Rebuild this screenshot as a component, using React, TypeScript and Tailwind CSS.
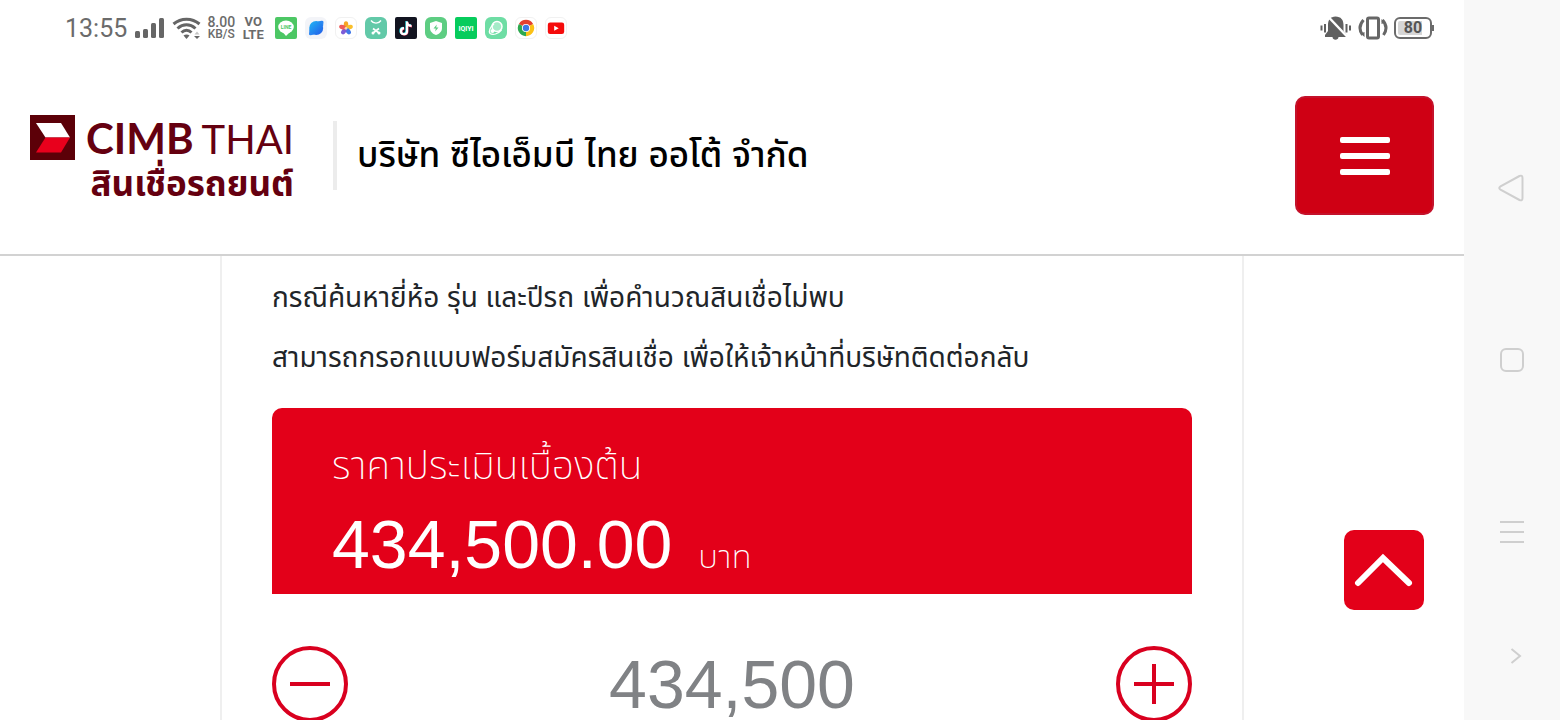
import type { ReactNode } from 'react'
import { useState } from 'react'

const STEP = 500
const APPRAISED = 434500

const SANS = "font-['Liberation_Sans','Noto_Sans_Thai','Noto_Sans',sans-serif]"

function SignalIcon() {
  return (
    <svg width="30" height="22" viewBox="0 0 30 22" fill="#666" aria-hidden="true">
      <rect x="0" y="14" width="5" height="7" rx="1.5" />
      <rect x="8" y="12" width="5" height="9" rx="1.5" />
      <rect x="16" y="6" width="5" height="15" rx="1.5" />
      <rect x="24" y="1" width="5" height="20" rx="1.5" />
    </svg>
  )
}

function WifiIcon() {
  return (
    <svg width="30" height="24" viewBox="0 0 30 24" fill="none" aria-hidden="true">
      <g stroke="#666" strokeWidth="3">
        <path d="M1.500 8C9 1.500 20 1.500 27.500 8" />
        <path d="M5.500 12.500C11 7.500 18 7.500 23.500 12.500" />
        <path d="M9.500 16.500C12.500 13.600 16.500 13.600 19.500 16.500" />
      </g>
      <path d="M11.500 19.500C13 18 16 18 17.500 19.500L14.500 23Z" fill="#666" />
      <path d="M22.500 18.500L25 15.500L27.500 18.500Z" fill="#c4c4c4" />
      <path d="M22 20H28L25 23Z" fill="#666" />
    </svg>
  )
}

function Tile({ label, bg, children }: { label: string; bg: string; children: ReactNode }) {
  return (
    <svg width="22" height="22" viewBox="0 0 22 22" role="img" aria-label={label} className={bg}>
      {children}
    </svg>
  )
}

function AppTiles() {
  return (
    <div className="flex items-center gap-2">
      <Tile label="LINE" bg="rounded-xs bg-[#4cc764]">
        <ellipse cx="11" cy="10" rx="7.800" ry="6.500" fill="#fff" />
        <path d="M8 15.500L11 19L15.500 14.500Z" fill="#fff" />
        <text x="11" y="12" fontSize="5" fontWeight="700" textAnchor="middle" fill="#4cc764" fontFamily="Roboto">
          LINE
        </text>
      </Tile>
      <Tile label="Browser" bg="rounded-md bg-[#f3f4f8]">
        <defs>
          <linearGradient id="planet" x1="0" y1="0" x2="1" y2="1">
            <stop offset="0" stopColor="#22b8f5" />
            <stop offset="1" stopColor="#2358e8" />
          </linearGradient>
        </defs>
        <path d="M13 4.500Q18.500 3 18.500 5L18 10ZM9 17.500Q3.800 19.200 4 17L4.500 12Z" fill="#2b86f2" />
        <circle cx="11.200" cy="11" r="7" fill="url(#planet)" />
      </Tile>
      <Tile label="Gallery" bg="rounded-md border border-[#f1f1f1] bg-white">
        <g transform="translate(11 11.300)">
          <ellipse cx="0" cy="-4" rx="2.500" ry="3.800" fill="#f6a623" />
          <ellipse cx="0" cy="-4" rx="2.500" ry="3.800" fill="#f9bf2b" transform="rotate(72)" />
          <ellipse cx="0" cy="-4" rx="2.500" ry="3.800" fill="#3f78e8" transform="rotate(144)" />
          <ellipse cx="0" cy="-4" rx="2.500" ry="3.800" fill="#7d5bd6" transform="rotate(216)" />
          <ellipse cx="0" cy="-4" rx="2.500" ry="3.800" fill="#ee5a5a" transform="rotate(288)" />
          <circle r="1.500" fill="#f7d9b0" />
        </g>
      </Tile>
      <Tile label="Tools" bg="rounded-md bg-[#62c9a8]">
        <path d="M6 3.500C8.500 7 13.500 7 16 3.500" stroke="#fff" strokeWidth="1.300" fill="none" />
        <path d="M8 11.500L14 16M14 11.500L8 16" stroke="#fff" strokeWidth="1.600" />
        <circle cx="8" cy="16" r="1.500" fill="#fff" />
        <circle cx="14" cy="16" r="1.500" fill="#fff" />
      </Tile>
      <Tile label="TikTok" bg="rounded-xs bg-[#121420]">
        <g fill="none" strokeWidth="2.200">
          <path d="M11.400 4V13.800A3 3 0 1 1 8.400 10.800M11.400 4C11.500 6.800 13.500 8.300 16 8.400" stroke="#25d5e0" />
          <path d="M12.400 5V14.600A3 3 0 1 1 9.400 11.600M12.400 5C12.500 7.800 14.500 9.300 17 9.400" stroke="#e8486b" />
          <path d="M12 4.500V14.200A3 3 0 1 1 9 11.200M12 4.500C12 7.300 14 8.800 16.500 8.900" stroke="#fff" />
        </g>
      </Tile>
      <Tile label="Security" bg="rounded-md bg-[#5dcd82]">
        <path d="M11 4L17 6V11C17 14.500 14.500 16.800 11 18C7.500 16.800 5 14.500 5 11V6Z" fill="#fff" />
        <path d="M11.800 7.500L8.500 11.500H10.800L10.200 14.500L13.500 10.500H11.200Z" fill="#5dcd82" />
      </Tile>
      <Tile label="iQIYI" bg="rounded-xs bg-[#06cc5c]">
        <text x="11" y="13.500" fontSize="7" fontWeight="700" textAnchor="middle" fill="#fff" fontFamily="Roboto">
          IQIYI
        </text>
      </Tile>
      <Tile label="Game space" bg="rounded-md bg-[#6edda4]">
        <circle cx="12" cy="9.500" r="5" stroke="#fff" strokeWidth="1.500" fill="#a5ebc8" />
        <path d="M9 7C5 10 3.500 14 5 16.500C8 18.500 13 17 16.500 13" stroke="#fff" strokeWidth="1.300" fill="none" />
        <circle cx="7.500" cy="14" r="2" fill="#fff" />
      </Tile>
      <Tile label="Chrome" bg="rounded-md border border-[#f1f1f1] bg-white">
        <path d="M11 11L3.200 6.500A9 9 0 0 1 18.800 6.500Z" fill="#e3402f" />
        <path d="M11 11L18.800 6.500A9 9 0 0 1 11 20Z" fill="#fbc116" />
        <path d="M11 11L11 20A9 9 0 0 1 3.200 6.500Z" fill="#2da94f" />
        <circle cx="11" cy="11" r="4.500" fill="#fff" />
        <circle cx="11" cy="11" r="3.500" fill="#3c78e6" />
      </Tile>
      <Tile label="YouTube" bg="rounded-md border border-[#f1f1f1] bg-white">
        <rect x="2" y="5" width="18" height="12.500" rx="2.500" fill="#f50b0b" />
        <path d="M9 8.500L14 11.200L9 14Z" fill="#fff" />
      </Tile>
    </div>
  )
}

function MutedBellIcon() {
  return (
    <svg width="32" height="26" viewBox="0 0 32 26" aria-hidden="true">
      <path
        d="M15.500 1.500C21 1.500 23.500 5 23.500 10V16L26.500 20V22H5V20L8 16V10C8 5 10.500 1.500 15.500 1.500ZM12.500 22H18.500C18.500 25.500 12.500 25.500 12.500 22Z"
        fill="#606060"
      />
      <path d="M7.500 1L27.500 22" stroke="#fff" strokeWidth="2.500" />
      <path d="M4 1L9 1L4 8Z" fill="#fff" />
      <path d="M1.500 10.500V15.500M5 9V17.500M26.500 9V17.500M30 10.500V15.500" stroke="#606060" strokeWidth="2" />
    </svg>
  )
}

function VibrateIcon() {
  return (
    <svg width="30" height="26" viewBox="0 0 30 26" fill="none" stroke="#666" strokeWidth="3" aria-hidden="true">
      <rect x="9.500" y="3" width="11" height="20" rx="1.500" />
      <path d="M5.500 5C1 10 1 15 4.500 20M24.500 5C29 10 29 15 25.500 20" />
      <path d="M2.500 18.500L6.500 17V22ZM27.500 7.500L23.500 9V4Z" fill="#666" stroke="none" />
    </svg>
  )
}

function StatusBar() {
  return (
    <div className="flex h-14 items-center justify-between pr-[30px] pl-[65px] font-[Roboto,sans-serif] text-[#6b6b6b]">
      <div className="flex items-center">
        <span className="mr-2 text-[25px] leading-none">13:55</span>
        <SignalIcon />
        <span className="ml-[7px]">
          <WifiIcon />
        </span>
        <span className="ml-1 flex w-[30px] flex-col items-center text-[12px] leading-[12px] font-medium">
          <span className="text-[14px]">8.00</span>
          <span>KB/S</span>
        </span>
        <span className="mr-[9px] ml-1 flex w-[26px] flex-col items-center text-[13px] leading-[13px] font-bold">
          <span>VO</span>
          <span>LTE</span>
        </span>
        <AppTiles />
      </div>
      <div className="flex items-center gap-[6px]">
        <MutedBellIcon />
        <VibrateIcon />
        <div className="flex items-center">
          <span className="flex h-[22px] w-[38px] items-center justify-center rounded-md border-2 border-[#6b6b6b] p-0.5">
            <span className="flex-1 rounded-xs bg-linear-to-r from-[#d6d6d6] from-80% to-white to-80% text-center text-[16px] leading-[14px] font-bold text-[#555]">
              80
            </span>
          </span>
          <span className="h-[6px] w-[2px] bg-[#6b6b6b]" />
        </div>
      </div>
    </div>
  )
}

function Logo() {
  return (
    <a href="#" className="flex gap-[11px] pt-[10px] text-[#650010]">
      <svg width="45" height="45" viewBox="0 0 45 45" aria-hidden="true">
        <rect width="45" height="45" fill="#5c0008" />
        <path d="M6 8H31L40 22.500H15.500Z" fill="#fff" />
        <path d="M15.500 22.500H40L31 37.500H6Z" fill="#e8001c" />
      </svg>
      <span className="flex w-[208px] flex-col">
        <span className="flex items-baseline justify-between font-[Lato,sans-serif] text-[42px] leading-[46px]">
          <span className="font-bold">CIMB</span>
          <span className="text-[40px]">THAI</span>
        </span>
        <span className={`${SANS} text-right text-[35px] leading-[44px] font-bold whitespace-nowrap`}>
          สินเชื่อรถยนต์
        </span>
      </span>
    </a>
  )
}

function Header() {
  return (
    <header className="flex h-[200px] shrink-0 items-center border-b-2 border-[#d2d2d2] px-[30px]">
      <Logo />
      <div className="mr-5 ml-[39px] h-[69px] w-1 bg-[#ececec]" />
      <p className="text-[35px] leading-[60px] font-medium whitespace-nowrap text-black">
        บริษัท ซีไอเอ็มบี ไทย ออโต้ จำกัด
      </p>
      <button
        type="button"
        aria-label="เมนู"
        className="ml-auto flex h-[119px] w-[139px] flex-col items-center justify-center gap-[10px] rounded-[10px] border-2 border-[#c4122b] bg-[#cf0014] pt-0.5"
      >
        <span className="h-[6px] w-[50px] rounded-xs bg-white" />
        <span className="h-[6px] w-[50px] rounded-xs bg-white" />
        <span className="h-[6px] w-[50px] rounded-xs bg-white" />
      </button>
    </header>
  )
}

function RoundButton({ label, onClick, children }: { label: string; onClick: () => void; children: ReactNode }) {
  return (
    <button type="button" aria-label={label} onClick={onClick} className="size-[76px] shrink-0 text-[#d9001f]">
      <svg viewBox="0 0 76 76" fill="none" stroke="currentColor" strokeWidth="4" aria-hidden="true">
        <circle cx="38" cy="38" r="36" />
        {children}
      </svg>
    </button>
  )
}

function LoanCard() {
  const [amount, setAmount] = useState(APPRAISED)

  return (
    <section className="mx-auto w-full max-w-5xl border-x-2 border-[#efefef] px-[50px] pt-3">
      <p className="text-[28px] leading-[60px] whitespace-nowrap text-[#212529]">
        กรณีค้นหายี่ห้อ รุ่น และปีรถ เพื่อคำนวณสินเชื่อไม่พบ
        <br />
        สามารถกรอกแบบฟอร์มสมัครสินเชื่อ เพื่อให้เจ้าหน้าที่บริษัทติดต่อกลับ
      </p>

      <div className="mt-5 h-[186px] rounded-t-[10px] bg-[#e30019] px-[60px] pt-6 text-white">
        <h2 className="text-[39px] leading-[68px] font-extralight">ราคาประเมินเบื้องต้น</h2>
        <p className="flex items-baseline gap-[26px]">
          <span className="text-[68px] leading-[88px]">
            {APPRAISED.toLocaleString('en-US', { minimumFractionDigits: 2 })}
          </span>
          <span className="text-[33px] font-extralight">บาท</span>
        </p>
      </div>

      <div className="flex items-center justify-between pt-[52px]">
        <RoundButton label="ลด" onClick={() => setAmount(amount - STEP)}>
          <path d="M18 38H58" />
        </RoundButton>
        <input
          type="text"
          inputMode="numeric"
          aria-label="ราคาประเมินเบื้องต้น"
          value={amount.toLocaleString('en-US')}
          onChange={(e) => setAmount(Number(e.target.value.replace(/\D/g, '')))}
          className="h-[76px] min-w-0 flex-1 text-center text-[68px] text-[#808285] outline-none"
        />
        <RoundButton label="เพิ่ม" onClick={() => setAmount(amount + STEP)}>
          <path d="M18 38H58M38 18V58" />
        </RoundButton>
      </div>
    </section>
  )
}

function NavRail() {
  return (
    <nav className="flex w-24 shrink-0 flex-col bg-[#f8f8f8] pt-[102px]">
      <button type="button" aria-label="Back" className="flex h-[172px] items-center justify-center pr-0.5">
        <svg width="26" height="28" viewBox="0 0 26 28" fill="none" stroke="#cfcfcf" strokeWidth="2">
          <path d="M21.500 2L2.500 12.300Q0 14 2.500 15.700L21.500 26Q24.500 27.300 24.500 24V4Q24.500 .7 21.500 2Z" />
        </svg>
      </button>
      <button type="button" aria-label="Home" className="flex h-[172px] items-center justify-center">
        <span className="size-6 rounded-md border-2 border-[#cfcfcf]" />
      </button>
      <button type="button" aria-label="Recents" className="flex h-[172px] items-center justify-center">
        <svg width="24" height="24" viewBox="0 0 24 24" stroke="#cfcfcf" strokeWidth="2">
          <path d="M0 2H24M0 12H24M0 22H24" />
        </svg>
      </button>
      <button type="button" aria-label="Hide" className="flex h-[76px] items-center justify-center pl-2">
        <svg width="12" height="18" viewBox="0 0 12 18" fill="none" stroke="#cfcfcf" strokeWidth="2">
          <path d="M1.500 2L10 9L1.500 16" />
        </svg>
      </button>
    </nav>
  )
}

export default function App() {
  return (
    <div className={`flex h-screen overflow-hidden bg-white ${SANS}`}>
      <div className="relative flex min-w-0 flex-1 flex-col">
        <StatusBar />
        <Header />
        <main className="flex min-h-0 flex-1 overflow-hidden">
          <LoanCard />
        </main>
        <button
          type="button"
          aria-label="กลับขึ้นด้านบน"
          className="absolute right-10 bottom-[110px] flex size-20 items-center justify-center rounded-[10px] bg-[#e30019]"
        >
          <svg width="60" height="36" viewBox="0 0 60 36" fill="none" stroke="#fff" strokeWidth="6" strokeLinecap="round">
            <path d="M4 31L29 6L55 31" />
          </svg>
        </button>
      </div>
      <NavRail />
    </div>
  )
}
